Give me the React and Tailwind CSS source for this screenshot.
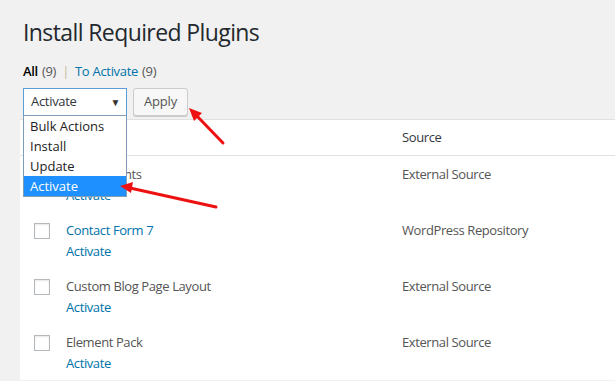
import React from "react";

const font = { fontFamily: '"Open Sans", "Noto Sans", sans-serif' };

function Row({ name, link, source, first }) {
  return (
    <div className="flex h-[56px]">
      <div className="w-[46px] pl-[14px] pt-[11px]">
        {!first && <div className="w-[16px] h-[16px] border border-[#b4b9be] bg-white shadow-[inset_0_1px_2px_rgba(0,0,0,0.1)]" />}
      </div>
      <div className="w-[336px] pt-[8px] tracking-[-0.4px]">
        <div className={`text-[13px] leading-[20px] ${link ? "text-[#0073aa]" : "text-[#555]"}`}>{name}</div>
        <div className="text-[13px] leading-[20px] mt-[1px] text-[#0073aa]">Activate</div>
      </div>
      <div className="pt-[8px] text-[13px] leading-[20px] text-[#555] tracking-[-0.4px]">{source}</div>
    </div>
  );
}

export default function App() {
  return (
    <div className="relative w-[615px] h-[381px] overflow-hidden bg-[#f1f1f1]" style={font}>
      <div className="pl-[23px] pt-[18px]">
        <h1 className="text-[23px] leading-[29px] text-[#23282d] font-normal tracking-[-0.6px]">Install Required Plugins</h1>
        <div className="mt-[14px] text-[13px] leading-[20px] text-[#555] flex items-center tracking-[-0.3px]">
          <span className="text-black font-semibold">All</span>
          <span className="ml-[4px]">(9)</span>
          <span className="mx-[6px] text-[#c8b99a]">|</span>
          <span className="text-[#0073aa]">To Activate</span>
          <span className="ml-[4px]">(9)</span>
        </div>
        <div className="mt-[7px] flex gap-[6px]">
          <div className="w-[104px] h-[28px] border border-[#5b9dd9] bg-white flex items-center justify-between pl-[7px] pr-[6px] text-[13px] text-[#32373c] tracking-[-0.3px]">
            <span>Activate</span>
            <span className="text-[10px] text-[#333]">▼</span>
          </div>
          <div className="w-[55px] h-[28px] border border-[#ccc] bg-[#f7f7f7] rounded-[3px] shadow-[0_1px_0_#ccc] flex items-center justify-center text-[13px] text-[#555] tracking-[-0.2px]">
            Apply
          </div>
        </div>
      </div>
      <div className="ml-[20px] mt-[3px] bg-white border-t border-[#e1e1e1] w-[620px]">
        <div className="flex h-[36px] border-b border-[#e1e1e1] items-center">
          <div className="w-[382px]" />
          <div className="text-[13px] text-[#32373c] tracking-[-0.4px]">Source</div>
        </div>
        <Row first name="Bdt Elements" source="External Source" />
        <Row name="Contact Form 7" link source="WordPress Repository" />
        <Row name="Custom Blog Page Layout" source="External Source" />
        <Row name="Element Pack" source="External Source" />
      </div>

      <div className="absolute left-[23px] top-[115px] w-[104px] h-[82px] bg-white border border-[#7f9db9] text-[13px] text-[#222]">
        <div className="h-[20px] leading-[20px] pl-[6px]">Bulk Actions</div>
        <div className="h-[20px] leading-[20px] pl-[6px]">Install</div>
        <div className="h-[20px] leading-[20px] pl-[6px]">Update</div>
        <div className="h-[20px] leading-[20px] pl-[6px] bg-[#1e90ff] text-white">Activate</div>
      </div>

      <svg className="absolute left-0 top-0" width="615" height="381">
        <line x1="223" y1="143" x2="196" y2="115" stroke="#ee1111" strokeWidth="3" strokeLinecap="round" />
        <polygon points="189,108 202,113 194,121" fill="#ee1111" />
        <line x1="216" y1="207" x2="130" y2="188" stroke="#ee1111" strokeWidth="3" strokeLinecap="round" />
        <polygon points="120,186 133,182 131,193" fill="#ee1111" />
      </svg>
    </div>
  );
}
